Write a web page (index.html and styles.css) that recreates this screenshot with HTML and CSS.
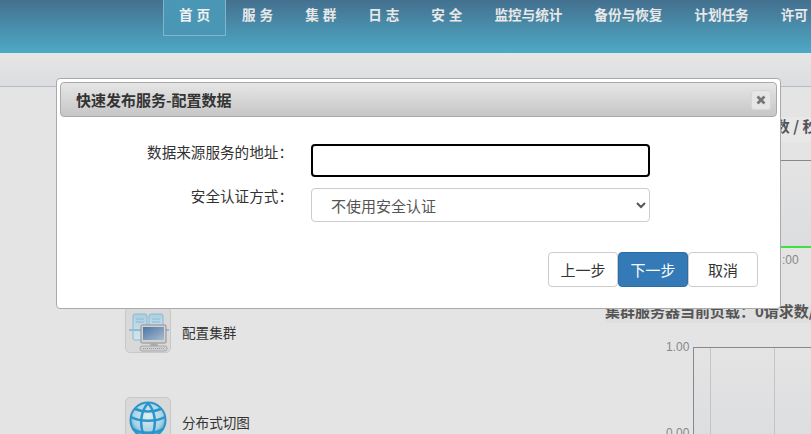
FILE: index.html
```html
<!DOCTYPE html>
<html lang="zh-CN">
<head>
    <meta charset="UTF-8">
    <title>快速发布服务</title>
    <link rel="stylesheet" href="styles.css">
</head>
<body>
    <div class="header">
        <ul class="nav">
            <li class="active">首 页</li>
            <li>服 务</li>
            <li>集 群</li>
            <li>日 志</li>
            <li>安 全</li>
            <li>监控与统计</li>
            <li>备份与恢复</li>
            <li>计划任务</li>
            <li>许可</li>
        </ul>
    </div>
    <div class="subbar"></div>

    <div class="main">
        <div class="side">
            <div class="side-item">
                <div class="icon-box">
                    <svg width="42" height="42" viewBox="0 0 42 42">
                        <defs>
                            <linearGradient id="srv" x1="0" y1="0" x2="0" y2="1">
                                <stop offset="0" stop-color="#a9cfe2"/>
                                <stop offset="1" stop-color="#d5e6ee"/>
                            </linearGradient>
                            <linearGradient id="scr" x1="0" y1="0" x2="1" y2="1">
                                <stop offset="0" stop-color="#4b76a6"/>
                                <stop offset="1" stop-color="#a9bccf"/>
                            </linearGradient>
                        </defs>
                        <rect x="5" y="4" width="14" height="26" rx="2" fill="url(#srv)" stroke="#8db9d0"/>
                        <rect x="21" y="4" width="14" height="20" rx="2" fill="url(#srv)" stroke="#8db9d0"/>
                        <path d="M8 9h8M24 9h8M8 12h8M24 12h8" stroke="#8db9d0"/>
                        <path d="M1 20h12M36 20h5" stroke="#93bcd2" stroke-width="2"/>
                        <rect x="13" y="15" width="25" height="18" rx="1" fill="#d2d2d2" stroke="#8f8f8f"/>
                        <rect x="15" y="17" width="21" height="13" fill="url(#scr)"/>
                        <path d="M23 33h6l1 3h-8z" fill="#aaa"/>
                        <rect x="12" y="36" width="27" height="5" rx="2" fill="#cfcfcf" stroke="#a8a8a8"/>
                        <path d="M15 38.500h21" stroke="#9a9a9a" stroke-dasharray="1 1"/>
                    </svg>
                </div>
                <span class="side-label">配置集群</span>
            </div>
            <div class="side-item">
                <div class="icon-box">
                    <svg width="42" height="42" viewBox="0 0 42 42">
                        <defs>
                            <radialGradient id="globe" cx="0.5" cy="0.4" r="0.6">
                                <stop offset="0" stop-color="#e4eef2"/>
                                <stop offset="0.7" stop-color="#a6d2e4"/>
                                <stop offset="1" stop-color="#3a9ccc"/>
                            </radialGradient>
                        </defs>
                        <circle cx="20" cy="20" r="17.500" fill="url(#globe)" stroke="#2f93c8" stroke-width="2"/>
                        <path d="M3 17c9 5 25 5 34 0M5 29c8 5 22 5 30 0M7 9c8 3 18 3 26 0" fill="none" stroke="#2b95cb" stroke-width="2.500"/>
                        <path d="M20 3c-8 9-9 24-3 34M20 3c8 9 9 24 3 34" fill="none" stroke="#2b95cb" stroke-width="2.500"/>
                    </svg>
                </div>
                <span class="side-label">分布式切图</span>
            </div>
        </div>

        <div class="charts">
            <div class="chart-title chart-title-top">集群服务当前负载：0请求数 / 秒</div>
            <div class="chart chart-top">
                <div class="plot plot-top"></div>
                <div class="tick">:00</div>
            </div>
            <div class="chart-title chart-title-load">集群服务器当前负载：0请求数/秒</div>
            <div class="chart chart-bottom">
                <div class="y-labels">
                    <span>1.00</span>
                    <span>0.00</span>
                </div>
                <div class="plot plot-bottom">
                    <i class="grid grid-a"></i>
                    <i class="grid grid-b"></i>
                </div>
            </div>
        </div>
    </div>

    <div class="modal">
        <div class="modal-head">
            <span class="modal-title">快速发布服务-配置数据</span>
            <span class="modal-close">
                <svg width="10" height="10" viewBox="0 0 10 10">
                    <path d="M1.500 1.500l7 7M8.500 1.500l-7 7" stroke="#777" stroke-width="2.800"/>
                </svg>
            </span>
        </div>
        <div class="modal-body">
            <div class="form-row">
                <label>数据来源服务的地址：</label>
                <input type="text" class="field field-focus">
            </div>
            <div class="form-row">
                <label>安全认证方式：</label>
                <select class="field">
                    <option>不使用安全认证</option>
                </select>
            </div>
            <div class="modal-foot">
                <button class="btn">上一步</button>
                <button class="btn btn-primary">下一步</button>
                <button class="btn">取消</button>
            </div>
        </div>
    </div>
</body>
</html>
```

FILE: styles.css
```css
* {
    box-sizing: border-box;
    margin: 0;
    padding: 0;
}

html, body {
    height: 434px;
    overflow: hidden;
}

body {
    font-family: "Noto Sans CJK SC", "Noto Sans", sans-serif;
    background: #e4e4e4;
    color: #333;
    font-size: 14px;
}

.header {
    height: 53px;
    background: linear-gradient(#44708f, #4daac6);
    padding-left: 163px;
}

.nav {
    display: flex;
    list-style: none;
    white-space: nowrap;
}

.nav li {
    height: 36px;
    line-height: 28px;
    padding: 0 16px;
    color: #e8e8e8;
    font-size: 13.6px;
    font-weight: bold;
    word-spacing: 0.8px;
}

.nav li.active {
    background: #4a96b5;
    border: 1px solid #80b5cd;
    border-top: 0;
    padding: 0 15px;
    color: #f2f2f2;
}

.subbar {
    height: 34px;
    background: linear-gradient(#e6e6e6, #dcdde0);
    border-bottom: 1px solid #b4bac6;
}

.main {
    display: flex;
    padding-left: 125px;
    height: 347px;
    overflow: hidden;
}

.side {
    width: 480px;
    padding-top: 220px;
}

.side-item {
    display: flex;
    align-items: flex-end;
    gap: 11px;
    height: 46px;
    margin-bottom: 44px;
}

.icon-box {
    width: 46px;
    height: 46px;
    padding: 2px;
    background: #d9d9d9;
    border: 1px solid #c8c8c8;
    border-radius: 5px;
}

.side-label {
    font-size: 13.6px;
    line-height: 20px;
    padding-bottom: 11px;
}

.charts {
    flex: 1;
    min-width: 0;
    padding-top: 30px;
    white-space: nowrap;
    overflow: hidden;
}

.chart-title {
    height: 18px;
    line-height: 18px;
    font-size: 15px;
    font-weight: bold;
    color: #555;
    background: #dfdfdf;
}

.chart-title-top {
    height: 25px;
    text-indent: -4px;
    background: #e8e8e8;
}

.chart-title-load {
    line-height: 12px;
}

.chart {
    position: relative;
}

.chart-top {
    height: 163px;
}

.plot-top {
    position: absolute;
    left: 0;
    right: 0;
    top: 18px;
    height: 88px;
    background: linear-gradient(#e4e4e4, #dcdde0);
    border-top: 1px solid #888;
    border-bottom: 2px solid #3fe03f;
}

.tick {
    position: absolute;
    left: 177px;
    top: 111px;
    font-family: "Liberation Sans", sans-serif;
    font-size: 12px;
    color: #888;
}

.chart-bottom {
    height: 120px;
    padding: 24px 0 0 88px;
}

.y-labels {
    position: absolute;
    left: 61px;
    top: 17px;
    display: flex;
    flex-direction: column;
    gap: 72px;
    font-family: "Liberation Sans", sans-serif;
    font-size: 12px;
    color: #888;
}

.plot-bottom {
    position: relative;
    height: 100px;
    background: linear-gradient(#e4e4e4, #dcdde0);
    border-left: 1px solid #888;
    border-top: 1px solid #888;
}

.grid {
    position: absolute;
    top: 0;
    bottom: 0;
    width: 1px;
    background: #c4c4c4;
}

.grid-a {
    left: 16px;
}

.grid-b {
    left: 80px;
}

.modal {
    position: absolute;
    left: 56px;
    top: 78px;
    width: 725px;
    height: 231px;
    padding: 3px;
    background: #fff;
    border: 1px solid #aaa;
    border-radius: 4px;
}

.modal-head {
    display: flex;
    align-items: center;
    justify-content: space-between;
    height: 35px;
    padding: 0 5px 0 15px;
    background: linear-gradient(#e6e6e6, #c6c6c6);
    border: 1px solid #aaa;
    border-radius: 4px;
}

.modal-title {
    font-size: 15px;
    font-weight: bold;
    color: #333;
}

.modal-close {
    display: flex;
    align-items: center;
    justify-content: center;
    width: 20px;
    height: 20px;
    background: #e6e6e6;
    border: 1px solid #d6d6d6;
    border-radius: 3px;
}

.modal-body {
    padding-top: 27px;
}

.form-row {
    display: flex;
    margin-bottom: 11px;
}

.form-row label {
    width: 233px;
    margin-right: 18px;
    text-align: right;
    font-size: 14.6px;
    line-height: 16px;
    color: #333;
}

.field {
    width: 339px;
    height: 34px;
    padding: 0 15px;
    font-family: inherit;
    font-size: 15px;
    color: #555;
    background: #fff;
    border: 1px solid #ccc;
    border-radius: 4px;
}

.field-focus {
    height: 33px;
    border: 2px solid #000;
    outline: none;
}

.modal-foot {
    display: flex;
    justify-content: flex-end;
    padding: 19px 19px 0 0;
}

.btn {
    width: 70px;
    height: 35px;
    font-family: inherit;
    font-size: 15px;
    color: #333;
    background: #fff;
    border: 1px solid #ccc;
    border-radius: 4px;
}

.btn-primary {
    color: #fff;
    background: #337ab7;
    border-color: #2e6da4;
}
```
